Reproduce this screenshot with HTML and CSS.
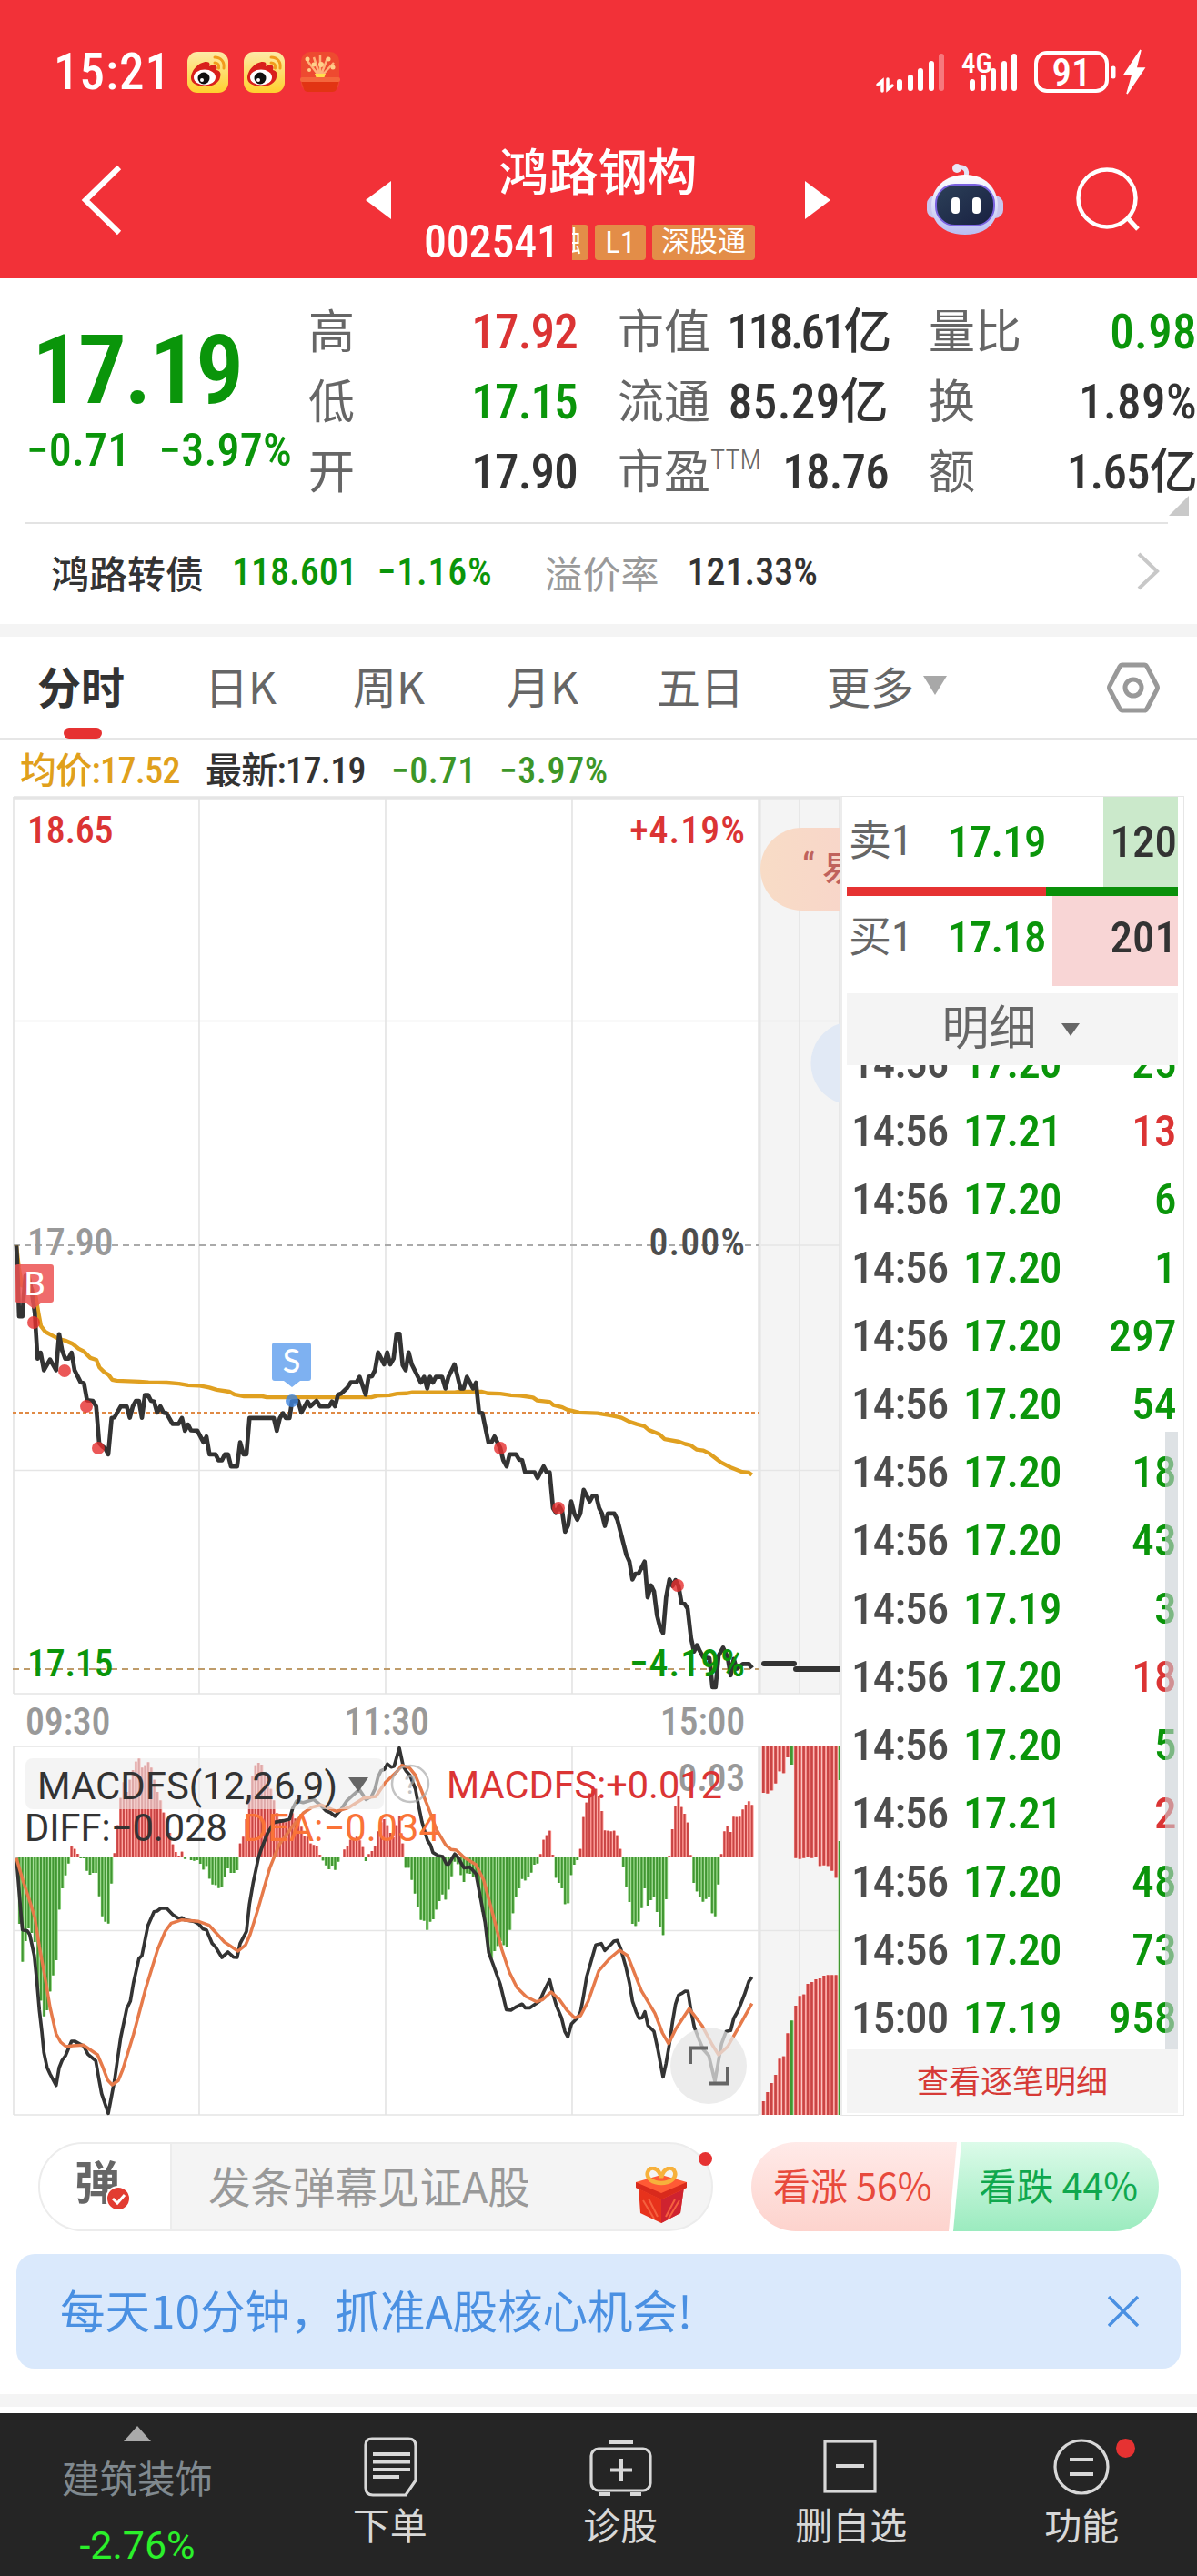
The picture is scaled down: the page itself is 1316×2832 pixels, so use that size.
FILE: index.html
```
<!DOCTYPE html>
<html lang="zh-CN">
<head>
    <meta charset="UTF-8">
    <meta name="viewport" content="width=device-width, initial-scale=1.0">
    <title>鸿路钢构 002541</title>
    <link rel="stylesheet" href="styles.css">
</head>
<body>
    <header class="header">
        <div class="status-bar">
            <span class="clock">15:21</span>
            <svg class="app-icon" width="45" height="45" viewBox="0 0 45 45">
                <defs><linearGradient id="wb" x1="0" y1="0" x2="0" y2="1"><stop offset="0" stop-color="#fdeaa8"/><stop offset="1" stop-color="#ffd02e"/></linearGradient></defs>
                <rect width="45" height="45" rx="11" fill="url(#wb)"/>
                <path d="M4 29c0-9 9-18 17-18 4 0 4 3 3 5 6-3 10-1 8 4 5 1 5 5 4 8-1 6-8 10-16 10S4 35 4 29z" fill="#d9201c"/>
                <ellipse cx="19" cy="28" rx="12" ry="8.500" fill="#fff"/>
                <circle cx="18" cy="29" r="6.500" fill="#111"/><circle cx="16" cy="31" r="2" fill="#fff"/>
                <path d="M30 6c7 0 11 5 10 12M30 12c4 0 5 3 4.500 6" fill="none" stroke="#f29b1d" stroke-width="3" stroke-linecap="round"/>
            </svg>
            <svg class="app-icon" width="45" height="45" viewBox="0 0 45 45">
                <rect width="45" height="45" rx="11" fill="url(#wb)"/>
                <path d="M4 29c0-9 9-18 17-18 4 0 4 3 3 5 6-3 10-1 8 4 5 1 5 5 4 8-1 6-8 10-16 10S4 35 4 29z" fill="#d9201c"/>
                <ellipse cx="19" cy="28" rx="12" ry="8.500" fill="#fff"/>
                <circle cx="18" cy="29" r="6.500" fill="#111"/><circle cx="16" cy="31" r="2" fill="#fff"/>
                <path d="M30 6c7 0 11 5 10 12M30 12c4 0 5 3 4.500 6" fill="none" stroke="#f29b1d" stroke-width="3" stroke-linecap="round"/>
            </svg>
            <svg class="app-icon" width="44" height="45" viewBox="0 0 44 45">
                <rect x="1" width="42" height="44" rx="10" fill="#ee4a30"/>
                <path d="M22 28L8 10M22 28L15 6M22 28L22 4M22 28L30 7M22 28L37 12" stroke="#ffb37a" stroke-width="2.500"/>
                <g fill="#ffd08a"><circle cx="8" cy="8" r="2.500"/><circle cx="15" cy="14" r="2.500"/><circle cx="23" cy="14" r="3"/><circle cx="31" cy="8" r="2.500"/><circle cx="36" cy="17" r="2.500"/><circle cx="10" cy="20" r="2"/></g>
                <path d="M16 24h12l-3 8h-6z" fill="#ffe04d"/>
                <path d="M1 31h42l-3 10q-1 3-5 3H9q-4 0-5-3z" fill="#e23413"/><rect y="28" width="44" height="5" rx="2" fill="#f4663c"/>
            </svg>
            <svg class="signals" width="300" height="50" viewBox="960 53 300 50">
                <g stroke="#fff" stroke-linecap="round" fill="none">
                    <path d="M969 99V88l-5 4M975 86v11l5-4" stroke-width="3.500"/>
                    <path d="M988 96v-7M1000 96V84M1011 96V77M1023 96V69" stroke-width="6"/>
                    <path d="M1034 96V61" stroke-width="6" opacity=".35"/>
                    <path d="M1068 96v-7M1080 96V84M1091 96V77M1103 96V69M1114 96V61" stroke-width="6"/>
                    <rect x="1138" y="57" width="78" height="42" rx="12" stroke-width="4"/>
                    <path d="M1223 74v9" stroke-width="5"/>
                </g>
                <path d="M1253 54l-18 27h9l-6 21 19-28h-9z" fill="#fff" stroke="#fff" stroke-width="1.500"/>
                <text class="net" x="1056" y="79">4G</text>
                <text class="battery" x="1177" y="93" text-anchor="middle">91</text>
            </svg>
        </div>
        <div class="nav-bar">
            <svg class="back" width="50" height="82" viewBox="0 0 50 82"><path d="M44 5L7 41l37 36" fill="none" stroke="#fff" stroke-width="6"/></svg>
            <svg class="prev" width="28" height="42" viewBox="0 0 28 42"><path d="M28 0v42L0 21z" fill="#fff"/></svg>
            <div class="stock">
                <h1>鸿路钢构</h1>
                <div class="stock-code">
                    <span>002541</span>
                    <i class="tag tag-cut"><b>融</b></i>
                    <i class="tag">L1</i>
                    <i class="tag">深股通</i>
                </div>
            </div>
            <svg class="next" width="28" height="42" viewBox="0 0 28 42"><path d="M0 0v42l28-21z" fill="#fff"/></svg>
            <svg class="robot" width="86" height="80" viewBox="0 0 86 80">
                <defs>
                    <linearGradient id="head" x1="0" y1="0" x2="0" y2="1"><stop offset="0" stop-color="#fff"/><stop offset="1" stop-color="#b9bdf2"/></linearGradient>
                    <linearGradient id="face" x1="0" y1="0" x2="1" y2="1"><stop offset="0" stop-color="#2c4058"/><stop offset="1" stop-color="#182041"/></linearGradient>
                </defs>
                <path d="M44 14c2-7-1-11-9-10" fill="none" stroke="#e3e3f5" stroke-width="5" stroke-linecap="round"/>
                <circle cx="34" cy="5" r="5" fill="#e9e6f6"/>
                <rect x="1" y="35" width="84" height="25" rx="9" fill="#c9c6ee"/>
                <path d="M43 12C64 12 79 26 79 46S65 78 43 78 6 66 6 46 22 12 43 12z" fill="url(#head)"/>
                <rect x="11" y="23" width="64" height="45" rx="21" fill="url(#face)" stroke="#7a62e0" stroke-width="2"/>
                <rect x="28" y="37" width="9" height="18" rx="4" fill="#fff"/><rect x="51" y="37" width="9" height="18" rx="4" fill="#fff"/>
            </svg>
            <svg class="search" width="74" height="74" viewBox="0 0 74 74"><circle cx="35" cy="35" r="31.500" fill="none" stroke="#fff" stroke-width="4.500"/><path d="M58 57l11 12" stroke="#fff" stroke-width="5"/></svg>
        </div>
    </header>

    <section class="quote">
        <div class="quote-main down">
            <div class="price">17.19</div>
            <div class="change"><span>−0.71</span><span>−3.97%</span></div>
        </div>
        <dl class="stats">
            <div><dt>高</dt><dd class="up">17.92</dd></div>
            <div><dt>市值</dt><dd class="tight">118.61亿</dd></div>
            <div><dt>量比</dt><dd class="down wide">0.98</dd></div>
            <div><dt>低</dt><dd class="down">17.15</dd></div>
            <div><dt>流通</dt><dd class="wide">85.29亿</dd></div>
            <div><dt>换</dt><dd class="wide">1.89%</dd></div>
            <div><dt>开</dt><dd>17.90</dd></div>
            <div><dt>市盈<sup>TTM</sup></dt><dd>18.76</dd></div>
            <div><dt>额</dt><dd>1.65亿</dd></div>
        </dl>
        <span class="corner"></span>
    </section>

    <section class="bond">
        <span class="bond-name">鸿路转债</span>
        <span class="down">118.601</span>
        <span class="down bond-chg">−1.16%</span>
        <span class="muted">溢价率</span>
        <span>121.33%</span>
        <svg class="bond-more" width="25" height="42" viewBox="0 0 25 42"><path d="M2 2l20 19L2 40" fill="none" stroke="#c8c8c8" stroke-width="4"/></svg>
    </section>

    <nav class="tabs">
        <a class="active">分时</a><a>日K</a><a>周K</a><a>月K</a><a>五日</a><a>更多<i></i></a>
        <svg width="58" height="56" viewBox="0 0 58 56"><path d="M17 3h24q2 0 3 2l11 21q1 2 0 4L44 51q-1 2-3 2H17q-2 0-3-2L3 30q-1-2 0-4L14 5q1-2 3-2z" fill="none" stroke="#999" stroke-width="5"/><circle cx="29" cy="28" r="9" fill="none" stroke="#999" stroke-width="5"/></svg>
    </nav>

    <div class="summary">
        <span class="avg">均价:17.52</span><span class="last">最新:17.19</span><span class="chg">−0.71</span><span class="chg">−3.97%</span>
    </div>

    <main class="board">
        <svg class="chart" id="chart" width="924" height="1451" viewBox="0 875 924 1451">
            <defs>
                <linearGradient id="pill"><stop offset="0" stop-color="#f8dcc6"/><stop offset="1" stop-color="#f8d6c9"/></linearGradient>
            </defs>
            <!-- grid -->
            <rect x="837" y="876" width="87" height="986" fill="#f4f4f4"/>
            <rect x="837" y="1920" width="87" height="405" fill="#f4f4f4"/>
            <g class="grid">
                <path d="M15 876V1862M219 876V1862M424 876V1862M629 876V1862M879 876V1862M923 876V1862M15 1862H924M15 1122.500H924M15 1616.500H924M837 1369H924"/>
                <path d="M15 1920V2325M219 1920V2325M424 1920V2325M629 1920V2325M879 1920V2325M15 1920H834M15 2325H834M15 2122.500H924"/>
                <path d="M15 877H924M835 876V1862M835 1920V2325" class="thick"/>
            </g>
            <path d="M15 1369H834" class="dash" stroke="#aaa" stroke-dasharray="7 5"/>
            <path d="M14 1553H834" class="dash" stroke="#e08a45" stroke-dasharray="4 3"/>
            <path d="M14 1835H834" class="dash" stroke="#bf9c6b" stroke-dasharray="7 5"/>

            <g id="price-layer"></g>

            <path d="M840 1829H873" class="after"/><path d="M875 1835H924" class="after"/>

            <g class="deal buy"><circle cx="37" cy="1454" r="7"/><circle cx="71" cy="1507" r="7"/><circle cx="95" cy="1546" r="7"/><circle cx="108" cy="1592" r="7"/><circle cx="550" cy="1592" r="7"/><circle cx="614" cy="1658" r="7"/><circle cx="745" cy="1743" r="7"/></g>
            <circle cx="321" cy="1540" r="7" class="deal sell"/>
            <path d="M20 1390h36q3 0 3 3v36q0 3-3 3h-10l-9 7-9-7h-8q-4 0-4-3v-36q0-3 4-3z" fill="#ec5252" fill-opacity=".85"/>
            <path d="M302 1476h37q3 0 3 3v36q0 3-3 3h-9l-9 7-9-7h-10q-3 0-3-3v-36q0-3 3-3z" fill="#7eb1f1"/>
            <text x="38" y="1424" class="marker">B</text>
            <text x="320.500" y="1509" class="marker">S</text>

            <text x="30" y="927" class="axis up">18.65</text>
            <text x="820" y="927" class="axis up end">+4.19%</text>
            <text x="30" y="1380" class="axis gray">17.90</text>
            <text x="820" y="1380" class="axis end" fill="#4d4d4d">0.00%</text>
            <text x="30" y="1843" class="axis down">17.15</text>
            <text x="820" y="1843" class="axis down end">−4.19%</text>
            <text x="28" y="1907" class="axis gray">09:30</text>
            <text x="425" y="1907" class="axis gray mid">11:30</text>
            <text x="819" y="1907" class="axis gray end time">15:00</text>

            <!-- barrage -->
            <path d="M924 910H881.500a45.500 45.500 0 0 0 0 91H924z" fill="url(#pill)"/>
            <path d="M924 1125a46 46 0 0 0 0 88z" fill="#e1e9f5"/>
            <text x="882" y="965" class="danmu quote-mark">“</text><text x="904" y="968" class="danmu">易</text>

            <!-- macd -->
            <g id="macd-layer"></g>
            <text x="819" y="1969" class="axis gray end time">0.03</text>
            <rect x="28" y="1933" width="394" height="56" rx="8" fill="#ececec" fill-opacity=".6"/>
            <text x="41" y="1978" class="macd" textLength="330" lengthAdjust="spacingAndGlyphs">MACDFS(12,26,9)</text>
            <path d="M383 1954h22l-11 16z" fill="#666"/>
            <circle cx="451" cy="1961" r="20" fill="none" stroke="#aaa" stroke-opacity=".7" stroke-width="2.500"/>
            <text x="451" y="1972" class="help">?</text>
            <text x="491" y="1977" class="macd up" textLength="303" lengthAdjust="spacingAndGlyphs">MACDFS:+0.012</text>
            <text x="27" y="2024" class="macd" textLength="223" lengthAdjust="spacingAndGlyphs">DIFF:−0.028</text>
            <text x="267" y="2024" class="macd dea" textLength="217" lengthAdjust="spacingAndGlyphs">DEA:−0.034</text>
            <circle cx="779" cy="2271" r="42" fill="#e6e6e6" fill-opacity=".75"/>
            <path d="M759 2269v-17.500h19M800 2272v18.500h-20" fill="none" stroke="#666" stroke-width="4"/>
        </svg>

        <aside class="book">
            <div class="level ask"><span>卖1</span><b>17.19</b><em>120</em></div>
            <div class="ratio"><i></i></div>
            <div class="level bid"><span>买1</span><b>17.18</b><em>201</em></div>
            <div class="book-title">明细<i></i></div>
            <div class="ticks">
                <div class="tick"><span>14:56</span><b>17.20</b><em>25</em></div>
                <div class="tick"><span>14:56</span><b>17.21</b><em class="up">13</em></div>
                <div class="tick"><span>14:56</span><b>17.20</b><em>6</em></div>
                <div class="tick"><span>14:56</span><b>17.20</b><em>1</em></div>
                <div class="tick"><span>14:56</span><b>17.20</b><em>297</em></div>
                <div class="tick"><span>14:56</span><b>17.20</b><em>54</em></div>
                <div class="tick"><span>14:56</span><b>17.20</b><em>18</em></div>
                <div class="tick"><span>14:56</span><b>17.20</b><em>43</em></div>
                <div class="tick"><span>14:56</span><b>17.19</b><em>3</em></div>
                <div class="tick"><span>14:56</span><b>17.20</b><em class="up">18</em></div>
                <div class="tick"><span>14:56</span><b>17.20</b><em>5</em></div>
                <div class="tick"><span>14:56</span><b>17.21</b><em class="up">2</em></div>
                <div class="tick"><span>14:56</span><b>17.20</b><em>48</em></div>
                <div class="tick"><span>14:56</span><b>17.20</b><em>73</em></div>
                <div class="tick"><span>15:00</span><b>17.19</b><em>958</em></div>
                <div class="scrollbar"></div>
            </div>
            <a class="book-more">查看逐笔明细</a>
        </aside>
    </main>

    <section class="interact">
        <div class="comment">
            <div class="comment-switch">弹
                <svg width="28" height="28" viewBox="0 0 28 28"><circle cx="14" cy="14" r="13" fill="#e23c32" stroke="#fff" stroke-width="2"/><path d="M8 14l5 5 8-9" fill="none" stroke="#fff" stroke-width="3"/></svg>
            </div>
            <div class="comment-input">发条弹幕见证A股</div>
            <svg class="gift" width="58" height="62" viewBox="0 0 58 62">
                <path d="M4 22l25 12 25-12-4 29-21 11L6 51z" fill="#e7321c"/>
                <path d="M29 34l25-12-4 29-21 11z" fill="#cf2330"/>
                <path d="M1 17l28-8 28 8v6L29 36 1 23z" fill="#ff5a35"/>
                <path d="M1 17l28 12 28-12v6L29 36 1 23z" fill="#d92a1c"/>
                <path d="M9 37l12 20M15 35l10 20M49 37L37 57M44 36L34 55" stroke="#f5603e" stroke-width="2"/>
                <path d="M29 18C20 18 12 13 14 6s12-6 15 6c3-12 13-13 15-6s-6 12-15 12z" fill="none" stroke="#f7b13c" stroke-width="4.500"/>
            </svg>
            <span class="dot"></span>
        </div>
        <div class="vote">
            <svg width="448" height="98" viewBox="0 0 448 98">
                <defs>
                    <linearGradient id="bull" x1="0" y1="0" x2="0" y2="1"><stop offset="0" stop-color="#ffeae8"/><stop offset="1" stop-color="#fdd3cd"/></linearGradient>
                    <linearGradient id="bear" x1="0" y1="0" x2="0" y2="1"><stop offset="0" stop-color="#dcfbe9"/><stop offset="1" stop-color="#9bebbf"/></linearGradient>
                </defs>
                <path d="M49 0H226L217 98H49A49 49 0 0 1 49 0z" fill="url(#bull)"/>
                <path d="M231 0H399a49 49 0 0 1 0 98H222z" fill="url(#bear)"/>
            </svg>
            <div class="vote-text"><span>看涨 56%</span><span>看跌 44%</span></div>
        </div>
    </section>

    <section class="banner">
        <span>每天10分钟，抓准A股核心机会!</span>
        <svg width="34" height="34" viewBox="0 0 34 34"><path d="M1 1l32 32M33 1L1 33" stroke="#4a90e2" stroke-width="3.500"/></svg>
    </section>

    <footer class="toolbar">
        <div class="sector"><i></i><span>建筑装饰</span><b>-2.76%</b></div>
        <a>
            <svg width="76" height="70" viewBox="-2 0 76 70"><path d="M16 4h40q8 0 8 8v38L53 66H17q-8 0-8-8V11q0-7 7-7z"/><path d="M17 21h41M17 29.500h41M17 38h41M17 46h29" stroke-width="4"/></svg>
            下单
        </a>
        <a>
            <svg width="76" height="70" viewBox="-1 0 76 70"><rect x="5" y="15" width="65" height="46" rx="8"/><path d="M24 8h27" stroke-width="4"/><path d="M38 26v25M26 38.500h24" stroke-width="4"/><path d="M14 65h12M48 65h12" stroke-width="4"/></svg>
            诊股
        </a>
        <a>
            <svg width="76" height="70" viewBox="1 0 76 70"><rect x="10" y="7" width="55" height="55"/><path d="M22 34h31" stroke-width="4"/></svg>
            删自选
        </a>
        <a>
            <svg width="76" height="70" viewBox="0 0 76 70"><circle cx="38" cy="35" r="29"/><path d="M25 27h26M25 43h26" stroke-width="4"/></svg>
            功能
            <span class="dot"></span>
        </a>
    </footer>

    <script src="chart.js"></script>
</body>
</html>
```
FILE: styles.css
```
* {
    box-sizing: border-box;
}

body {
    margin: 0;
    width: 1316px;
    height: 2832px;
    overflow: hidden;
    background-color: #fff;
    color: #333;
    font-family: "Roboto Condensed", "Noto Sans CJK SC", sans-serif;
    font-weight: 500;
}

svg {
    display: block;
    flex: none;
}

h1, dl, dd {
    margin: 0;
}

i, em {
    font-style: normal;
}

.up {
    color: #db3434;
    fill: #db3434;
}

.down {
    color: #0a950a;
    fill: #0a950a;
}

.muted {
    color: #999;
    font-weight: 400;
}

/* header */
.header {
    height: 306px;
    padding-top: 50px;
    background-color: #f23138;
    color: #fff;
}

.status-bar {
    display: flex;
    align-items: center;
    height: 58px;
    padding-left: 59px;
    padding-right: 55px;
}

.clock {
    width: 147px;
    font-size: 55px;
    line-height: 58px;
    letter-spacing: 1px;
}

.app-icon {
    margin-right: 17px;
}

.signals {
    margin-left: auto;
}

.net {
    font-size: 31px;
    fill: #fff;
}

.battery {
    font-size: 43px;
    fill: #fff;
}

.nav-bar {
    display: flex;
    align-items: center;
    height: 198px;
    padding-top: 26px;
}

.back {
    margin-left: 87px;
}

.prev {
    margin-left: 265px;
}

.stock {
    width: 455px;
    padding-top: 16px;
    text-align: center;
}

.stock h1 {
    font-size: 54.5px;
    font-weight: 500;
    line-height: 76px;
}

.stock-code {
    display: flex;
    align-items: center;
    height: 76px;
    padding-left: 36px;
    font-size: 50px;
}

.stock-code span {
    width: 163px;
    text-align: left;
    letter-spacing: -0.2px;
}

.tag {
    height: 39px;
    margin-right: 7px;
    padding: 0 10px;
    border-radius: 4px;
    background-color: #e38d48;
    font-size: 31px;
    font-weight: 400;
    line-height: 38px;
}

.tag:nth-of-type(2) {
    width: 56px;
    font-size: 34px;
}

.tag-cut {
    display: flex;
    justify-content: flex-end;
    width: 18px;
    padding-right: 8px;
    overflow: hidden;
    border-radius: 0 4px 4px 0;
}

.tag b {
    font-weight: 400;
}

.robot {
    margin-left: 105px;
}

.search {
    margin-left: 78px;
}

/* quote */
.quote {
    position: relative;
    display: flex;
    height: 270px;
}

.quote::after {
    content: "";
    position: absolute;
    left: 28px;
    right: 32px;
    bottom: 0;
    height: 2px;
    background-color: #e3e3e3;
}

.quote-main {
    width: 340px;
    padding-top: 43px;
}

.price {
    padding-left: 35px;
    font-size: 106px;
    font-weight: 600;
    line-height: 116px;
    letter-spacing: -2.5px;
}

.change {
    display: flex;
    gap: 31px;
    padding-left: 29px;
    font-size: 50px;
    line-height: 60px;
    letter-spacing: 0.2px;
}

.stats {
    display: grid;
    grid-template-columns: 296px 298px 295px;
    grid-auto-rows: 77px;
    column-gap: 44px;
    padding-top: 21px;
    font-size: 53px;
}

.stats div {
    display: flex;
    justify-content: space-between;
    line-height: 77px;
    white-space: nowrap;
}

.stats dt {
    color: #666;
    font-size: 51px;
    font-weight: 400;
}

.stats dd {
    letter-spacing: -0.8px;
}

.stats .tight {
    letter-spacing: -3.2px;
}

.stats .wide {
    letter-spacing: 0.4px;
}

.stats sup {
    position: relative;
    top: -3px;
    font-size: 31px;
    font-weight: 300;
    line-height: 0;
}

.corner {
    position: absolute;
    right: 9px;
    bottom: 9px;
    border-left: 22px solid transparent;
    border-bottom: 22px solid #c9c9c9;
}

/* convertible bond */
.bond {
    display: flex;
    align-items: center;
    height: 124px;
    padding: 0 41px 6px 56px;
    border-bottom: 14px solid #f4f4f4;
    font-size: 42px;
}

.bond span {
    margin-right: 31px;
}

.bond .bond-chg {
    margin: 0 57px 0 -9px;
    letter-spacing: 0.8px;
}

.bond .bond-more {
    margin-left: auto;
}

/* tabs */
.tabs {
    display: grid;
    grid-template-columns: 184px 163px 169px 165px 187px 1fr auto;
    align-items: center;
    height: 113px;
    padding: 0 41px;
    border-bottom: 2px solid #e6e6e6;
    color: #666;
    font-family: "Noto Sans CJK SC", sans-serif;
    font-size: 48px;
    font-weight: 400;
}

.tabs a {
    position: relative;
    display: flex;
    align-items: center;
    margin-top: -5px;
    line-height: 104px;
}

.tabs .active {
    color: #333;
    font-weight: 700;
}

.tabs .active::after {
    content: "";
    position: absolute;
    left: 29px;
    bottom: -7px;
    width: 42px;
    height: 12px;
    border-radius: 6px;
    background-color: #e63232;
}

.tabs i {
    margin-left: 10px;
    border: 13px solid transparent;
    border-top: 21px solid #a8a8a8;
    border-bottom: 0;
}

.summary {
    display: flex;
    height: 62px;
    padding: 7px 0 0 22px;
    font-size: 40px;
    line-height: 56px;
}

.avg {
    width: 204px;
    color: #e0a01c;
    letter-spacing: -0.7px;
}

.last {
    width: 204px;
    letter-spacing: -0.7px;
}

.chg {
    width: 119px;
    color: #3c9628;
    letter-spacing: 0.6px;
}

/* chart + order book */
.board {
    display: flex;
    height: 1451px;
}

.grid path {
    fill: none;
    stroke: #e5e5e5;
    stroke-width: 1.7;
}

.grid .thick {
    stroke-width: 3.5;
}

.dash {
    fill: none;
    stroke-width: 1.8;
}

.line {
    fill: none;
    stroke: #333;
    stroke-width: 4.7;
    stroke-linejoin: round;
}

.line-avg {
    stroke: #e0a020;
    stroke-width: 4.4;
}

.line-diff {
    stroke-width: 3.7;
}

.line-dea {
    stroke: #e67a4a;
    stroke-width: 3.5;
}

.bar-up {
    fill: #c94444;
}

.bar-down {
    fill: #419632;
}

.halo-up {
    fill: #ff9a94;
}

.halo-down {
    fill: #93d683;
}

.after {
    fill: none;
    stroke: #333;
    stroke-width: 6;
    stroke-linecap: round;
}

.deal {
    fill-opacity: 0.8;
}

.buy {
    fill: #e62e2e;
}

.sell {
    fill: #3f84dd;
}

.marker {
    fill: #fff;
    font-family: Lato, sans-serif;
    font-size: 36px;
    font-weight: 500;
    text-anchor: middle;
}

.axis {
    font-size: 42px;
    letter-spacing: -0.3px;
}

.gray {
    fill: #999;
}

.end {
    text-anchor: end;
    letter-spacing: 1px;
}

.time {
    letter-spacing: -0.3px;
}

.mid {
    text-anchor: middle;
}

.danmu {
    fill: #c0625c;
    font-size: 38px;
    font-family: "Noto Sans CJK SC", sans-serif;
}

.quote-mark {
    font-family: "Roboto Condensed", sans-serif;
}

.macd {
    font-family: Roboto, sans-serif;
    font-size: 42px;
    font-weight: 400;
    fill: #333;
}

.macd.up {
    fill: #db3434;
}

.macd.dea {
    fill: #fa7337;
}

.help {
    fill: #aaa;
    fill-opacity: 0.7;
    font-size: 30px;
    text-anchor: middle;
}

.book {
    display: flex;
    flex-direction: column;
    width: 378px;
    padding: 0 6px 2px 5px;
    border: 1px solid #e6e6e6;
    border-left: 2px solid #ececec;
    font-size: 49px;
}

.book b {
    color: #0a950a;
    font-weight: 500;
}

.level {
    display: flex;
    height: 99px;
    padding-left: 2px;
    line-height: 99px;
}

.level span {
    width: 109px;
    color: #666;
    font-size: 47px;
    font-weight: 400;
    line-height: 95px;
}

.level b {
    flex: 1;
    letter-spacing: -0.8px;
}

.level em {
    padding-right: 1px;
    text-align: right;
}

.ask em {
    width: 82px;
    background-color: #cbe9cb;
}

.bid {
    line-height: 92px;
}

.bid span {
    line-height: 89px;
}

.bid em {
    width: 138px;
    background-color: #f8d5d5;
}

.ratio {
    height: 10px;
    background-color: #0a900a;
}

.ratio i {
    display: block;
    width: 60.3%;
    height: 10px;
    background-color: #e63232;
}

.book-title {
    display: flex;
    align-items: center;
    justify-content: center;
    height: 79px;
    margin-top: 8px;
    padding-right: 4px;
    background-color: #f4f4f4;
    color: #666;
    font-size: 52px;
    font-weight: 400;
    line-height: 76px;
}

.book-title i {
    margin-left: 27px;
    border: 10px solid transparent;
    border-top: 14px solid #666;
    border-bottom: 0;
}

.ticks {
    position: relative;
    display: flex;
    flex: 1;
    flex-direction: column;
    justify-content: flex-end;
    overflow: hidden;
}

.tick {
    display: flex;
    flex: none;
    height: 75px;
    padding: 0 1px 0 5px;
    line-height: 81px;
}

.tick span {
    width: 123px;
    color: #4d4d4d;
    letter-spacing: -0.8px;
}

.tick b {
    letter-spacing: -0.8px;
}

.tick em {
    margin-left: auto;
    color: #0a950a;
    letter-spacing: 0.4px;
}

.tick .up {
    color: #db3434;
}

.scrollbar {
    position: absolute;
    right: 0;
    bottom: 0;
    width: 14px;
    height: 679px;
    background-color: rgba(200, 207, 212, 0.6);
}

.book-more {
    height: 70px;
    background-color: #f4f4f4;
    color: #d63a36;
    font-size: 35px;
    font-weight: 400;
    line-height: 73px;
    text-align: center;
}

/* barrage input and vote */
.interact {
    display: flex;
    justify-content: space-between;
    padding: 29px 42px 25px;
}

.comment {
    position: relative;
    display: flex;
    align-items: center;
    width: 742px;
    height: 98px;
    border: 2px solid #ececec;
    border-radius: 49px;
    background-color: #f4f4f4;
}

.comment-switch {
    position: relative;
    width: 145px;
    height: 94px;
    padding-left: 38px;
    border-right: 2px solid #ececec;
    border-radius: 47px 0 0 47px;
    background-color: #fff;
    color: #666;
    font-size: 50px;
    font-weight: 700;
    line-height: 88px;
}

.comment-switch svg {
    position: absolute;
    left: 72px;
    top: 46px;
}

.comment-input {
    padding-left: 40px;
    color: #999;
    font-family: "Noto Sans CJK SC", sans-serif;
    font-size: 46.5px;
    font-weight: 400;
    line-height: 80px;
    padding-bottom: 4px;
}

.gift {
    margin: 18px 26px 0 auto;
}

.comment .dot {
    right: -1px;
    top: 9px;
    width: 15px;
    height: 15px;
}

.dot {
    position: absolute;
    border-radius: 50%;
    background-color: #e63232;
}

.vote {
    position: relative;
    width: 448px;
}

.vote-text {
    position: absolute;
    inset: 0;
    display: flex;
    justify-content: space-between;
    padding: 0 23px 0 24px;
    color: #e84a3c;
    font-family: "Noto Sans CJK SC", sans-serif;
    font-size: 41px;
    font-weight: 400;
    line-height: 93px;
}

.vote-text span + span {
    color: #10a84e;
}

.banner {
    display: flex;
    align-items: center;
    justify-content: space-between;
    height: 126px;
    margin: 0 18px 28px;
    padding: 0 46px 0 48px;
    border-radius: 20px;
    background-color: #dae9fc;
    color: #4a90e2;
    font-family: "Noto Sans CJK SC", sans-serif;
    font-size: 49.5px;
    font-weight: 400;
    line-height: 116px;
}

.banner span {
    padding-bottom: 5px;
}

/* bottom bar */
.toolbar {
    display: grid;
    grid-template-columns: 302px repeat(4, 253.5px);
    height: 200px;
    border-top: 14px solid #f4f4f4;
    box-shadow: inset 0 7px 0 #fff;
    background-color: #252525;
    color: #d8d8d8;
    font-size: 41px;
    font-weight: 400;
}

.toolbar a {
    position: relative;
    display: flex;
    flex-direction: column;
    align-items: center;
    padding-top: 31px;
    line-height: 63px;
}

.toolbar svg {
    fill: none;
    stroke: #d8d8d8;
    stroke-width: 3.2;
}

.toolbar .dot {
    left: 164px;
    top: 35px;
    width: 21px;
    height: 21px;
}

.sector {
    display: flex;
    flex-direction: column;
    align-items: center;
    padding-top: 21px;
    color: #80898f;
    line-height: 60px;
}

.sector i {
    border: 15px solid transparent;
    border-top: 0;
    border-bottom: 17px solid #aaa;
}

.sector span {
    margin-top: 13px;
    font-size: 41.5px;
}

.sector b {
    margin-top: 11px;
    color: #2bf02b;
    font-family: Roboto, sans-serif;
    font-size: 43px;
    font-weight: 400;
}
```
FILE: chart.js
```
const NS = 'http://www.w3.org/2000/svg';
const priceLayer = document.getElementById('price-layer');
const macdLayer = document.getElementById('macd-layer');

function add(parent, tag, attrs) {
    const el = document.createElementNS(NS, tag);
    for (const key in attrs) {
        el.setAttribute(key, attrs[key]);
    }
    parent.appendChild(el);
}

// "x,y x,y ..." in thirds of a pixel horizontally, sy vertically
function toPixels(str, ox, oy, sy) {
    return str.trim().split(/\s+/).map(p => {
        const [x, y] = p.split(',').map(Number);
        return (ox + x / 3).toFixed(1) + ',' + (oy + y / sy).toFixed(1);
    }).join(' ');
}

// price, morning and afternoon
const priceAm = '54,82 56,120 59,190 63,300 74,300 78,240 84,175 94,175 104,220 115,290 118,340 124,430 134,412 145,466 165,433 185,466 195,355 205,405 215,430 226,430 236,412 246,466 266,503 277,506 287,558 306,560 317,577 327,690 337,700 347,707 357,725 368,613 378,610 398,577 418,577 428,612 438,577 448,560 458,560 468,612 478,542 488,542 498,560 508,562 518,596 529,577 539,596 549,598 569,631 589,631 600,613 610,652 620,633 630,651 651,652 671,688 681,670 691,725 711,725 721,743 732,743 742,725 752,725 762,762 782,762 792,688 803,725 813,725 823,613 903,613 913,652 923,613 933,598 943,613 955,613 963,562 983,560 994,596 1014,562 1024,577 1044,560 1056,577 1085,577 1095,562 1105,577 1115,541 1125,538 1145,520 1157,503 1176,503 1186,486 1206,541 1216,486 1227,484 1237,466 1247,411 1267,448 1277,411 1287,448 1298,430 1308,354 1318,354 1328,450 1338,466 1348,411 1358,448 1388,504 1399,486 1409,522';
const pricePm = '8,486 18,504 28,486 48,486 59,522 69,486 89,448 109,522 119,522 130,486 150,522 160,504 170,596 181,598 201,688 211,688 221,670 240,706 250,743 261,762 271,725 292,725 302,741 312,743 322,780 353,780 363,798 383,762 393,780 403,780 414,890 424,905 434,885 444,900 454,963 464,943 474,870 484,907 494,926 504,907 515,834 535,870 545,852 556,852 566,890 575,907 585,945 595,907 616,907 626,926 656,1035 666,1055 676,1110 686,1092 696,1092 716,1055 726,1165 737,1128 747,1147 757,1220 767,1258 777,1275 787,1165 798,1110 808,1130 818,1112 828,1130 838,1183 848,1185 858,1200 869,1290 879,1332 889,1312 899,1332 910,1350 930,1352 940,1442 950,1442 960,1345 975,1320 990,1350 1000,1405 1010,1355 1020,1385 1040,1370 1060,1370 1071,1383';
const avgAm = '54,82 62,150 72,205 90,205 105,215 118,240 127,290 135,330 150,348 170,358 195,370 215,375 238,384 260,400 275,407 298,428 318,434 328,457 345,473 358,480 370,495 385,498 460,501 490,503 550,504 590,507 620,512 655,513 690,519 715,526 757,532 775,541 805,546 865,546 880,549 1225,549 1245,544 1285,543 1310,538 1340,537 1360,534';
const avgPm = '0,534 90,534 105,532 180,532 200,537 240,538 275,543 305,544 348,550 362,559 403,563 415,573 445,580 460,587 500,596 560,598 610,606 640,612 665,624 690,632 715,638 730,650 765,663 782,678 830,686 850,693 868,697 887,710 910,713 930,722 965,748 1000,765 1038,779 1060,781 1070,788';

add(priceLayer, 'polyline', {
    class: 'line line-avg',
    points: toPixels(avgAm, 0, 1340, 2.8) + ' ' + toPixels(avgPm, 470, 1340, 2.8)
});
add(priceLayer, 'polyline', {
    class: 'line',
    points: toPixels(priceAm, 0, 1340, 2.8) + ' ' + toPixels(pricePm, 470, 1340, 2.8)
});

// macd bars, one per minute, y of the bar end
const bars = [765,890,822,780,795,825,975,1018,1070,1050,988,935,885,718,648,605,566,510,518,534,548,548,590,603,597,597,674,740,758,764,632,532,440,350,298,330,290,258,230,220,250,242,232,250,290,330,358,398,425,465,503,528,540,527,551,543,555,557,555,567,586,574,616,635,637,647,643,612,582,597,597,588,500,478,420,345,278,242,234,240,265,275,320,358,400,420,428,430,425,400,418,425,445,475,478,500,505,510,537,556,572,585,573,587,560,543,520,507,488,482,478,490,512,558,535,525,507,460,430,420,440,465,480,440,410,500,580,580,620,665,710,752,755,785,758,750,718,690,668,685,652,608,560,568,604,627,598,600,612,602,680,725,770,850,878,855,838,822,835,840,785,730,678,648,617,622,612,596,570,566,535,488,473,458,537,613,630,648,700,697,604,570,555,518,413,365,335,325,320,345,393,457,458,460,458,473,518,577,643,693,765,772,758,713,648,705,687,675,726,775,802,684,540,453,375,345,380,402,431,538,630,658,678,692,683,677,730,740,635,535,460,442,462,412,413,412,388,372,361,373];
const ZERO = 546;
const step = (2480 - 64) / (bars.length - 1) / 3;

function bar(x, y1, y2, dir, w) {
    const top = Math.min(y1, y2);
    const height = Math.max(Math.abs(y2 - y1), 1);
    add(macdLayer, 'rect', { class: 'halo-' + dir, x: x - w / 2 - 0.5, y: top, width: w + 1.4, height: height });
    add(macdLayer, 'rect', { class: 'bar-' + dir, x: x - w / 2, y: top, width: w, height: height });
}

bars.forEach((v, i) => {
    bar(64 / 3 + i * step, 1860 + ZERO / 3, 1860 + v / 3, v < ZERO ? 'up' : 'down', 2);
});

// after-hours bars: the strip right of the session
const upper = [333,335,325,302,262,268,216,240,548,551,548,544,548,546,574,572,574,590,613];
const lower = [1350,1320,1290,1263,1210,1202,1126,1084,1035,1003,998,963,957,948,945,936,934,934,934];
upper.forEach((v, i) => {
    const x = 839.3 + i * 4.43;
    const dir = i === 7 ? 'down' : 'up';
    bar(x, 1919, 1860 + v / 3, dir, 2.6);
    bar(x, 2325, 1860 + lower[i] / 3, dir, 2.6);
});
bar(923, 1919, 1957, 'down', 2);
bar(923, 2024, 2325, 'down', 2);

const diffAm = '54,548 60,620 68,720 74,785 90,788 98,800 113,870 122,960 130,1050 138,1120 145,1190 155,1238 165,1260 185,1298 195,1240 205,1215 216,1200 236,1152 246,1152 276,1168 290,1195 316,1217 325,1270 335,1325 357,1390 378,1280 388,1210 398,1140 418,1045 430,1020 440,960 458,880 468,870 488,770 508,725 518,723 530,714 550,714 570,735 590,748 600,745 610,752 640,757 655,765 670,782 681,785 700,830 710,840 732,876 752,858 770,875 782,876 792,830 813,790 823,700 835,630 853,545 863,515 883,465 905,430 935,425 955,420 965,385 978,360 1000,365 1035,355 1055,372 1075,392 1090,398 1105,410 1125,388 1145,358 1165,340 1185,322 1207,355 1225,345 1237,320 1247,280 1257,260 1268,255 1278,238 1290,248 1300,245 1317,185 1330,245 1340,262 1352,275 1370,320';
const diffPm = '0,372 12,430 30,490 40,505 48,530 65,540 80,543 92,568 100,568 120,535 130,545 150,580 170,578 190,600 205,680 220,760 232,860 245,895 270,965 290,1048 305,1050 320,1040 342,1030 352,1042 368,1042 400,1020 413,990 433,950 445,1000 455,1035 472,1075 483,1120 493,1138 505,1095 525,1075 535,1055 545,1000 555,940 565,905 585,835 603,830 615,853 635,833 645,822 656,820 668,850 685,910 696,960 706,1020 718,1055 728,1077 738,1075 747,1055 757,1100 777,1120 790,1180 800,1235 807,1270 817,1225 828,1160 838,1090 848,1030 858,1000 868,995 880,987 889,988 898,1045 910,1105 925,1145 940,1180 958,1200 978,1285 990,1215 1000,1160 1015,1120 1030,1117 1040,1077 1055,1050 1075,1000 1090,955 1100,941';
const deaAm = '54,548 75,620 95,680 115,745 130,840 150,950 165,1040 185,1128 200,1155 218,1170 240,1167 275,1165 300,1182 322,1197 340,1240 355,1280 370,1296 390,1282 405,1245 440,1130 480,980 520,850 545,790 565,763 600,752 655,757 690,770 740,825 785,855 810,835 825,800 850,720 890,580 920,505 960,450 1000,400 1030,380 1060,373 1110,394 1150,382 1200,350 1240,345 1270,300 1310,262 1325,242 1350,250 1370,275';
const deaPm = '0,300 30,375 60,455 90,505 108,520 125,522 150,545 190,570 215,620 250,750 275,850 300,925 325,975 355,1005 390,1022 410,1015 438,990 465,1015 490,1050 515,1075 535,1068 560,1020 595,920 630,880 663,852 690,870 735,985 780,1060 805,1125 825,1160 850,1110 893,1045 935,1100 970,1165 990,1197 1020,1170 1060,1100 1100,1028';

add(macdLayer, 'polyline', {
    class: 'line line-diff',
    points: toPixels(diffAm, 0, 1860, 3) + ' ' + toPixels(diffPm, 460, 1860, 3)
});
add(macdLayer, 'polyline', {
    class: 'line line-dea',
    points: toPixels(deaAm, 0, 1860, 3) + ' ' + toPixels(deaPm, 460, 1860, 3)
});
```
